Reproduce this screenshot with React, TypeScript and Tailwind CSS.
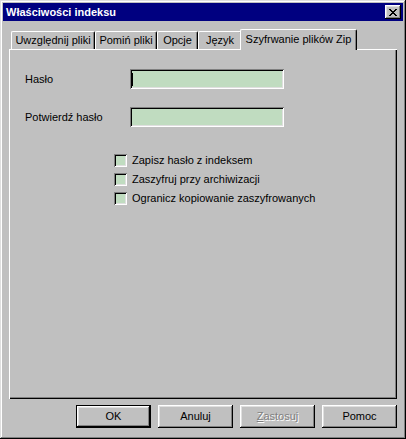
const raised =
  "shadow-[inset_-1px_-1px_0_#000,inset_1px_1px_0_#fff,inset_-2px_-2px_0_#808080,inset_2px_2px_0_#dfdfdf]";
const sunken =
  "shadow-[inset_1px_1px_0_#808080,inset_-1px_-1px_0_#fff,inset_2px_2px_0_#000,inset_-2px_-2px_0_#dfdfdf]";

const tabs = [
  { label: "Uwzględnij pliki", w: "w-[84px]" },
  { label: "Pomiń pliki", w: "w-[62px]" },
  { label: "Opcje", w: "w-[41px]" },
  { label: "Język", w: "w-[44px]" },
];

const options = [
  "Zapisz hasło z indeksem",
  "Zaszyfruj przy archiwizacji",
  "Ogranicz kopiowanie zaszyfrowanych",
];

function Tab({ label, w }: { label: string; w: string }) {
  return (
    <div
      className={`${w} h-[18px] flex items-center justify-center border-l border-t border-white rounded-tl-[2px] rounded-tr-[2px] shadow-[inset_-1px_0_0_#808080] border-r border-r-black`}
    >
      {label}
    </div>
  );
}

function Field({ label, caret }: { label: string; caret?: boolean }) {
  return (
    <div className="flex items-center h-[20px]">
      <span className="w-[105px]">{label}</span>
      <div className={`w-[154px] h-[20px] bg-[#c0dcc0] flex items-center pl-[2px] ${sunken}`}>
        {caret && <span className="w-px h-[13px] bg-black" />}
      </div>
    </div>
  );
}

function Button({
  children,
  primary,
  disabled,
}: {
  children: React.ReactNode;
  primary?: boolean;
  disabled?: boolean;
}) {
  return (
    <button
      className={`w-[75px] h-[23px] flex items-center justify-center ${
        primary ? "border border-black" : ""
      } ${
        disabled ? "text-[#808080] [text-shadow:1px_1px_0_#fff]" : "text-black"
      }`}
    >
      <span className={`w-full h-full flex items-center justify-center ${raised}`}>
        {children}
      </span>
    </button>
  );
}

export default function App() {
  return (
    <div
      className={`w-[406px] h-[439px] bg-[#c0c0c0] p-[3px] flex flex-col text-[11px] text-black shadow-[inset_-1px_-1px_0_#000,inset_1px_1px_0_#dfdfdf,inset_-2px_-2px_0_#808080,inset_2px_2px_0_#fff]`}
      style={{ fontFamily: '"Liberation Sans", Arial, sans-serif' }}
    >
      {/* title bar */}
      <div className="h-[18px] bg-[#000080] flex items-center justify-between pl-[3px] pr-[2px]">
        <span className="text-white font-bold text-[11px]">Właściwości indeksu</span>
        <div className={`w-[16px] h-[14px] bg-[#c0c0c0] flex items-center justify-center ${raised}`}>
          <svg width="8" height="7" viewBox="0 0 8 7" shapeRendering="crispEdges">
            <path
              d="M0 0h2v1h-2zM6 0h2v1h-2zM1 1h2v1h-2zM5 1h2v1h-2zM2 2h4v1h-4zM3 3h2v1h-2zM2 4h4v1h-4zM1 5h2v1h-2zM5 5h2v1h-2zM0 6h2v1h-2zM6 6h2v1h-2z"
              fill="#000"
            />
          </svg>
        </div>
      </div>

      <div className="px-[6px] pt-[8px]">
        {/* tabs */}
        <div className="flex items-end pl-[2px]">
          {tabs.map((t) => (
            <Tab key={t.label} label={t.label} w={t.w} />
          ))}
          <div className="relative z-10 -mx-[2px] -mb-px w-[117px] h-[21px] pb-[2px] flex items-center justify-center bg-[#c0c0c0] border-l border-t border-white rounded-tl-[2px] rounded-tr-[2px] border-r border-r-black shadow-[inset_-1px_0_0_#808080]">
            Szyfrwanie plików Zip
          </div>
        </div>

        {/* panel */}
        <div className="h-[350px] pl-[16px] pt-[20px] shadow-[inset_1px_1px_0_#fff,inset_-1px_-1px_0_#000,inset_-2px_-2px_0_#808080]">
          <Field label="Hasło" caret />
          <div className="mt-[18px]">
            <Field label="Potwierdź hasło" />
          </div>
          <div className="mt-[27px] ml-[89px] flex flex-col gap-[6px]">
            {options.map((o) => (
              <label key={o} className="flex items-center h-[13px] gap-[5px]">
                <span className={`w-[13px] h-[13px] bg-[#c0dcc0] ${sunken}`} />
                <span>{o}</span>
              </label>
            ))}
          </div>
        </div>
      </div>

      {/* buttons */}
      <div className="flex justify-end gap-[7px] mt-[6px] pr-[6px]">
        <Button primary>OK</Button>
        <Button>Anuluj</Button>
        <Button disabled>
          <span className="underline">Z</span>astosuj
        </Button>
        <Button>Pomoc</Button>
      </div>
    </div>
  );
}
